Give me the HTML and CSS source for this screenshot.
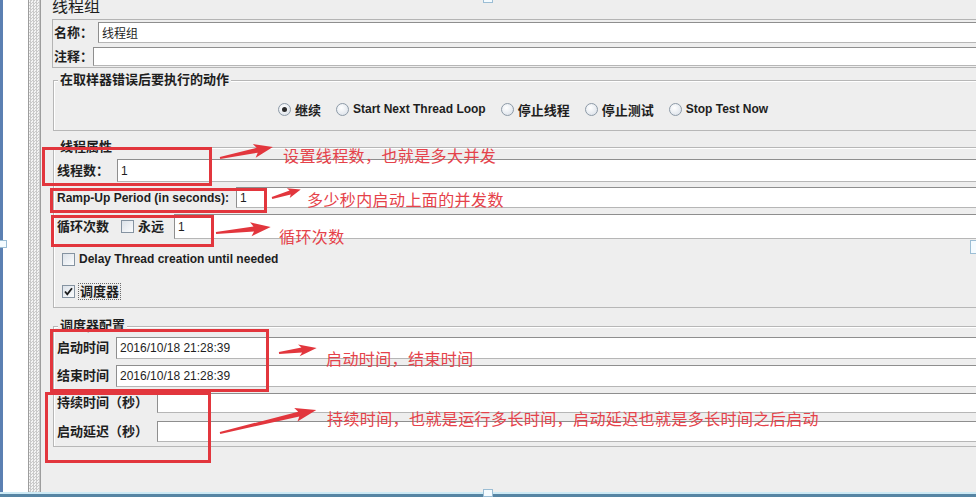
FILE: index.html
```html
<!DOCTYPE html>
<html lang="zh-CN">
<head>
    <meta charset="UTF-8">
    <title>线程组</title>
    <link rel="stylesheet" href="styles.css">
</head>
<body>

<div class="window">
    <div class="body">
        <div class="edge"></div>
        <div class="tree"></div>
        <div class="splitter"></div>

        <div class="main">
            <div class="panel-title">线程组</div>

            <div class="name-box">
                <div class="row">
                    <span class="lbl lbl-name">名称：</span>
                    <div class="field field-name">线程组</div>
                </div>
                <div class="row">
                    <span class="lbl lbl-comment">注释：</span>
                    <div class="field field-comment"></div>
                </div>
            </div>

            <fieldset class="group group-error">
                <legend>在取样器错误后要执行的动作</legend>
                <div class="radios">
                    <span class="opt"><span class="radio on"></span>继续</span>
                    <span class="opt en"><span class="radio"></span>Start Next Thread Loop</span>
                    <span class="opt"><span class="radio"></span>停止线程</span>
                    <span class="opt"><span class="radio"></span>停止测试</span>
                    <span class="opt en"><span class="radio"></span>Stop Test Now</span>
                </div>
            </fieldset>

            <fieldset class="group group-thread">
                <legend>线程属性</legend>
                <div class="row threads">
                    <span class="lbl">线程数：</span>
                    <div class="field">1</div>
                </div>
                <div class="row ramp">
                    <span class="lbl en">Ramp-Up Period (in seconds):</span>
                    <div class="field">1</div>
                </div>
                <div class="row loop">
                    <span class="lbl lbl-loop">循环次数</span>
                    <span class="check"></span>
                    <span class="lbl lbl-forever">永远</span>
                    <div class="field">1</div>
                </div>
                <div class="row delay">
                    <span class="check"></span>
                    <span class="lbl en">Delay Thread creation until needed</span>
                </div>
                <div class="row scheduler">
                    <span class="check on">
                        <svg width="11" height="11" viewBox="0 0 11 11"><path d="M2 5.5 L4.3 8.3 L9 2.2" fill="none" stroke="#1c1c1c" stroke-width="1.8"/></svg>
                    </span>
                    <span class="lbl focus">调度器</span>
                </div>
            </fieldset>

            <fieldset class="group group-sched">
                <legend>调度器配置</legend>
                <div class="row start">
                    <span class="lbl">启动时间</span>
                    <div class="field date">2016/10/18 21:28:39</div>
                </div>
                <div class="row end">
                    <span class="lbl">结束时间</span>
                    <div class="field date">2016/10/18 21:28:39</div>
                </div>
                <div class="row duration">
                    <span class="lbl">持续时间（秒）</span>
                    <div class="field"></div>
                </div>
                <div class="row startup">
                    <span class="lbl">启动延迟（秒）</span>
                    <div class="field"></div>
                </div>
            </fieldset>
        </div>
    </div>
    <div class="bottom-bar"></div>

    <!-- annotations drawn over the screenshot -->
    <svg class="marks" width="976" height="497" viewBox="0 0 976 497">
        <g fill="none" stroke="#e2363d" stroke-width="3">
            <rect x="43.5" y="148.5" width="167" height="36"/>
            <rect x="51.5" y="189.5" width="214" height="22"/>
            <rect x="52.5" y="216.5" width="160" height="29"/>
            <rect x="51.5" y="330.5" width="216" height="60"/>
            <rect x="46.5" y="393.5" width="163" height="68"/>
        </g>
        <g fill="#e2363d">
            <path transform="translate(220 158) rotate(-11.7)" d="M0,-1 L38,-2.5 L35,-7 L54,0 L35,7 L38,2.5 L0,1 Z"/>
            <path transform="translate(272 198) rotate(-16.7)" d="M0,-1 L19,-2 L17,-5 L30,0 L17,5 L19,2 L0,1 Z"/>
            <path transform="translate(216 233) rotate(-6.2)" d="M0,-1 L38,-2.5 L35,-7 L55,0 L35,7 L38,2.5 L0,1 Z"/>
            <path transform="translate(279 353) rotate(-7.5)" d="M0,-1 L23,-2.5 L20,-6 L38,0 L20,6 L23,2.5 L0,1 Z"/>
            <path transform="translate(220 433) rotate(-13.5)" d="M0,-1 L81,-2.5 L78,-7 L99,0 L78,7 L81,2.5 L0,1 Z"/>
        </g>
    </svg>
    <span class="note note-1">设置线程数，也就是多大并发</span>
    <span class="note note-2">多少秒内启动上面的并发数</span>
    <span class="note note-3">循环次数</span>
    <span class="note note-4">启动时间，结束时间</span>
    <span class="note note-5">持续时间，也就是运行多长时间，启动延迟也就是多长时间之后启动</span>

    <span class="handle handle-top"></span>
    <span class="handle handle-bottom"></span>
    <span class="handle handle-left"></span>
    <span class="handle handle-right"></span>
</div>

</body>
</html>
```

FILE: styles.css
```css
* {
    box-sizing: border-box;
}
html, body {
    margin: 0;
}
body {
    width: 976px;
    height: 497px;
    overflow: hidden;
    background: #eeeeee;
    font-family: "Liberation Sans", "Noto Sans CJK SC", sans-serif;
    font-size: 13px;
    color: #1e1e1e;
}
.window {
    position: relative;
    height: 497px;
    display: flex;
    flex-direction: column;
}
.body {
    flex: 1;
    display: flex;
    min-height: 0;
}
.edge {
    width: 3px;
    background: #5b80b2;
}
.tree {
    width: 25px;
    background: #fff;
}
.splitter {
    width: 13px;
    border-left: 1px solid #9d9d9d;
    border-right: 1px solid #9d9d9d;
    background: repeating-conic-gradient(#cacaca 0 25%, #f4f4f4 0 50%) 0 0 / 3px 3px;
}
.main {
    flex: 1;
    min-width: 0;
    overflow: hidden;
    padding-left: 11px;
}
.bottom-bar {
    height: 5px;
    background: linear-gradient(#cdeaf5 0 2px, #5685a4 2px);
}

.panel-title {
    margin-top: -4px;
    height: 23px;
    line-height: 19px;
    font-size: 16px;
    font-family: "Noto Sans CJK SC", sans-serif;
}

/* name / comment */
.name-box {
    border: 1px solid #b4b4b4;
    margin-right: -10px;
    padding: 2px 0 1px 1px;
}
.name-box .row + .row {
    margin-top: 4px;
}
.lbl-name { width: 44px; }
.lbl-comment { width: 39px; }
.field-name { height: 21px; font-size: 13px; }
.field-comment { height: 19px; border-left-color: #fff; }

.row {
    display: flex;
    align-items: center;
}
.lbl {
    flex: none;
    font-weight: bold;
    white-space: nowrap;
    line-height: 16px;
}
.en {
    font-size: 12px;
}
.field {
    flex: 1;
    min-width: 0;
    background: #fff;
    border: 1px solid;
    border-color: #8e8e8e #d2d2d2 #b6b6b6 #8e8e8e;
    padding-left: 3px;
    font-size: 12px;
    display: flex;
    align-items: center;
    white-space: nowrap;
}
.date {
    font-size: 12px;
}

/* titled borders */
.group {
    margin: 0 -10px 0 1px;
    padding: 0 0 0 3px;
    border: 1px solid #b7b7b7;
    box-shadow: inset 1px 1px 0 #fff;
    min-width: 0;
}
.group legend {
    margin-left: 1px;
    padding: 0 2px;
    font-weight: bold;
    font-size: 13px;
    line-height: 16px;
    background: #eeeeee;
}
.group-error {
    margin-top: 4px;
}
.group-thread {
    margin-top: 8px;
    padding-bottom: 7px;
}
.group-sched {
    margin-top: 10px;
    padding-bottom: 4px;
}

.radios {
    display: flex;
    align-items: center;
    gap: 15px;
    height: 16px;
    margin: 13px 0;
    padding-left: 221px;
}
.opt {
    display: inline-flex;
    align-items: center;
    gap: 4px;
    font-weight: bold;
    white-space: nowrap;
}
.radio {
    width: 13px;
    height: 13px;
    border-radius: 50%;
    border: 1px solid #8d9aa7;
    background: radial-gradient(circle at 40% 35%, #ffffff, #d6dde6);
    display: grid;
    place-items: center;
}
.radio.on::after {
    content: "";
    width: 5px;
    height: 5px;
    border-radius: 50%;
    background: #2a2a2a;
}
.check {
    flex: none;
    width: 13px;
    height: 13px;
    border: 1px solid #8593a1;
    background: linear-gradient(135deg, #dce2e9, #fbfcfd);
    display: grid;
    place-items: center;
}

/* thread properties */
.threads { margin-top: 4px; }
.threads .lbl { width: 60px; }
.threads .field { height: 23px; }
.ramp { margin-top: 5px; }
.ramp .lbl { width: 179px; }
.ramp .field { height: 21px; }
.loop { margin-top: 6px; }
.loop .field { height: 25px; }
.lbl-loop { width: 64px; }
.lbl-forever { width: 36px; margin-left: 4px; }
.delay {
    margin-top: 11px;
    height: 18px;
    padding-left: 5px;
    gap: 4px;
}
.scheduler {
    margin-top: 14px;
    height: 18px;
    padding-left: 5px;
    gap: 3px;
}
.focus {
    border: 1px dotted #6a6a6a;
    padding: 0 1px;
    line-height: 15px;
}

/* scheduler config */
.start { margin-top: 3px; }
.start .lbl, .end .lbl { width: 59px; }
.start .field, .end .field { height: 22px; }
.end { margin-top: 6px; }
.duration { margin-top: 6px; }
.duration .lbl, .startup .lbl { width: 100px; }
.duration .field { height: 20px; }
.startup { margin-top: 8px; }
.startup .field { height: 21px; }

/* annotation layer */
.marks {
    position: absolute;
    left: 0;
    top: 0;
    pointer-events: none;
}
.note {
    position: absolute;
    font-family: "Noto Sans CJK SC", sans-serif;
    font-size: 16px;
    line-height: 18px;
    letter-spacing: 0.4px;
    color: #e5424a;
    white-space: nowrap;
}
.note-1 { left: 283px; top: 146px; }
.note-2 { left: 307px; top: 190px; }
.note-3 { left: 279px; top: 227px; }
.note-4 { left: 326px; top: 349px; }
.note-5 { left: 327px; top: 409px; }

.handle {
    position: absolute;
    width: 10px;
    height: 8px;
    background: #f4fbff;
    border: 1px solid #9bbdd4;
}
.handle-top { left: 483px; top: -5px; }
.handle-bottom { left: 483px; top: 489px; }
.handle-left { left: -3px; top: 240px; }
.handle-right { left: 970px; top: 240px; height: 14px; }
```
